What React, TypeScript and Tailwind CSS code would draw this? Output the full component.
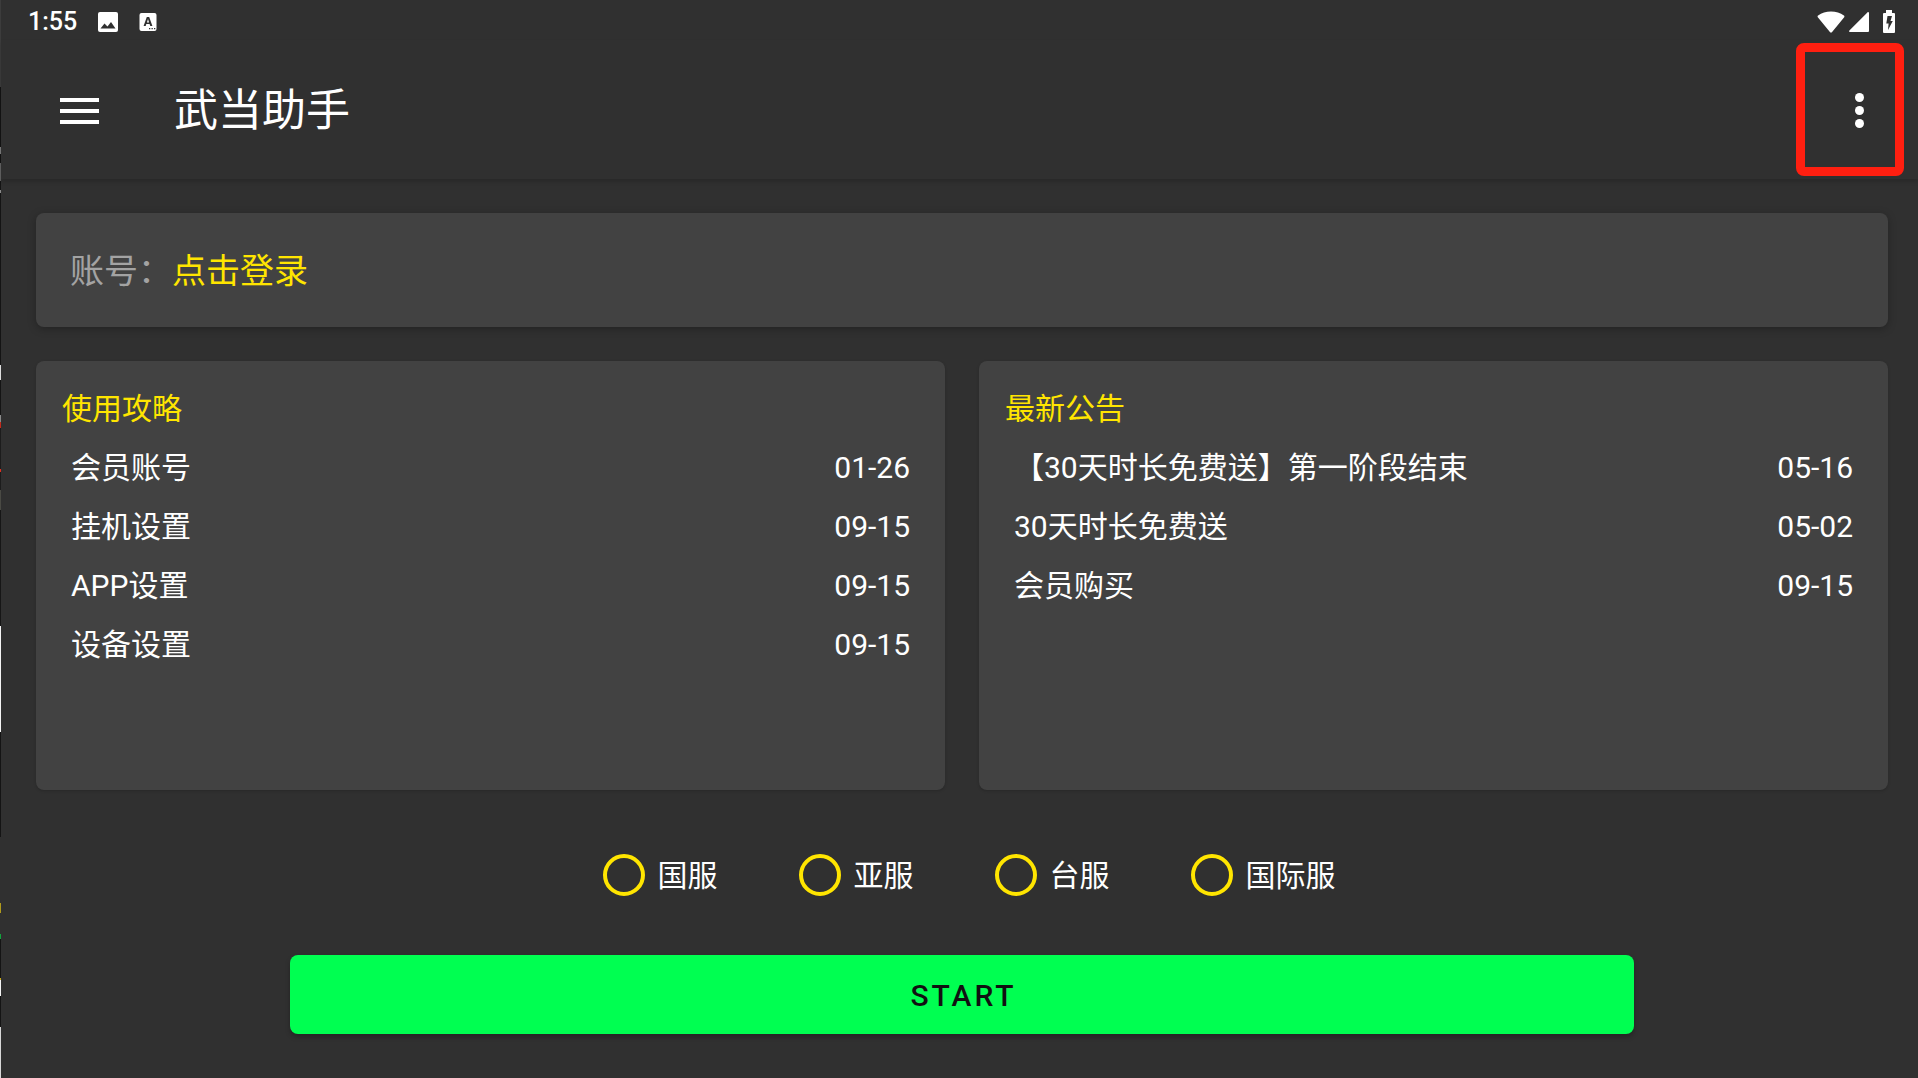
const guides = [
  { title: "会员账号", date: "01-26" },
  { title: "挂机设置", date: "09-15" },
  { title: "APP设置", date: "09-15" },
  { title: "设备设置", date: "09-15" },
];

const notices = [
  { title: "【30天时长免费送】第一阶段结束", date: "05-16" },
  { title: "30天时长免费送", date: "05-02" },
  { title: "会员购买", date: "09-15" },
];

const servers = ["国服", "亚服", "台服", "国际服"];

// Sliver of the windows behind the app: [share of the height, colour]
const sliver: [number, string][] = [
  [87, "#3c3c3c"],
  [60, "#141414"],
  [7, "#7d7d7d"],
  [9, "#141414"],
  [18, "#636363"],
  [9, "#141414"],
  [3, "#8a8a8a"],
  [172, "#141414"],
  [15, "#dddddd"],
  [35, "#141414"],
  [7, "#8a8a8a"],
  [6, "#c42a1c"],
  [41, "#1c1c1c"],
  [3, "#e03020"],
  [18, "#1c1c1c"],
  [20, "#4a4a44"],
  [116, "#161616"],
  [106, "#f4f4f4"],
  [105, "#141414"],
  [66, "#303030"],
  [10, "#b09a1c"],
  [21, "#303030"],
  [5, "#12a33c"],
  [39, "#141414"],
  [2, "#c9ab1c"],
  [16, "#f4f4f4"],
  [31, "#141414"],
  [51, "#d8d8d8"],
];

function StatusBar() {
  return (
    <div className="flex h-10 items-center justify-between pr-[23px] pl-[27px] pt-[3px]">
      <div className="flex items-center">
        <span className="text-[25px] leading-8 font-medium">1:55</span>
        <svg className="ml-5 size-[22px]" viewBox="0 0 22 22" aria-hidden="true">
          <rect x="1" y="1" width="20" height="20" rx="2" fill="#fff" />
          <path d="M3.500 17.500 7.500 12.500l3 3L14 11l4.500 6.500z" fill="#303030" />
        </svg>
        <svg className="ml-5 size-[18px]" viewBox="0 0 18 18" aria-hidden="true">
          <rect x="0.5" y="0" width="17" height="18" rx="2" fill="#fff" />
          <path
            d="M7.8 4h2.4l3.2 9h-2.1l-.7-2H7.3l-.6 2H4.6zM7.9 9.4h2.2L9 6z"
            fill="#303030"
          />
          <path d="M10 15h1.3v1.3H10zM12.5 15h1.3v1.3h-1.3zM15 15h1.3v1.3H15z" fill="#303030" />
        </svg>
      </div>
      <div className="flex items-center">
        <svg className="h-[22px] w-7" viewBox="0 0 28 22" aria-hidden="true">
          <path
            d="M14 21.5c-.5 0-.8-.2-1.1-.6L.8 6.2C.4 5.600.5 5 1.100 4.600 4.600 1.900 9.100.5 14 .5s9.400 1.400 12.900 4.100c.6.4.7 1 .3 1.600L15.100 20.900c-.3.4-.6.6-1.100.6z"
            fill="#fff"
          />
        </svg>
        <svg className="ml-1 size-5" viewBox="0 0 20 20" aria-hidden="true">
          <path d="M20 1v18a1 1 0 0 1-1 1H1c-1 0-1.300-.9-.6-1.600L18.400.4C19-.2 20 .1 20 1z" fill="#fff" />
        </svg>
        <svg className="ml-3.5 h-[23px] w-3" viewBox="0 0 12 23" aria-hidden="true">
          <path
            d="M3 0h6v3h2a1 1 0 0 1 1 1v18a1 1 0 0 1-1 1H1a1 1 0 0 1-1-1V4a1 1 0 0 1 1-1h2z"
            fill="#fff"
          />
          <path d="M4.500 6H9L7.500 11h2.300L5 20l.6-6.500H3.300z" fill="#303030" />
        </svg>
      </div>
    </div>
  );
}

function AppBar() {
  return (
    <header className="flex h-[139px] items-center justify-between pr-3.5 pl-[59px] shadow-[0_3px_4px_rgba(0,0,0,0.15)]">
      <div className="flex items-center pt-0.5">
        <button type="button" aria-label="菜单" className="flex w-[39px] flex-col gap-[7px] py-2">
          <span className="h-1 w-full bg-white" />
          <span className="h-1 w-full bg-white" />
          <span className="h-1 w-full bg-white" />
        </button>
        <h1 className="ml-[75px] text-[44px] leading-[60px] font-normal">武当助手</h1>
      </div>
      <button
        type="button"
        aria-label="更多选项"
        className="flex h-[133px] w-[108px] items-center justify-center rounded-lg border-[9px] border-[#ff1f10] pl-[18px]"
      >
        <svg className="h-9 w-[9px]" viewBox="0 0 9 36" fill="#fff" aria-hidden="true">
          <circle cx="4.500" cy="5.500" r="4.500" />
          <circle cx="4.500" cy="18.500" r="4.500" />
          <circle cx="4.500" cy="31.500" r="4.500" />
        </svg>
      </button>
    </header>
  );
}

function ArticlePanel({ heading, items }: { heading: string; items: { title: string; date: string }[] }) {
  return (
    <section className="min-h-[429px] flex-1 rounded-lg bg-[#424242] pt-[18px] pr-[35px] pl-[26px] text-3xl leading-[59px] shadow-[0_1px_3px_rgba(0,0,0,0.18)]">
      <h2 className="text-[#ffe500]">{heading}</h2>
      <ul>
        {items.map((item) => (
          <li key={item.title}>
            <a href="#" className="flex justify-between pl-[9px]">
              <span>{item.title}</span>
              <time>{item.date}</time>
            </a>
          </li>
        ))}
      </ul>
    </section>
  );
}

export default function App() {
  return (
    <div className="flex min-h-screen bg-[#303030] font-[Roboto,'Noto_Sans_CJK_SC',sans-serif] text-white">
      <div className="flex w-px flex-col" aria-hidden="true">
        {sliver.map(([share, color], i) => (
          <span key={i} style={{ flexGrow: share, backgroundColor: color }} />
        ))}
      </div>
      <div className="min-w-0 flex-1">
        <StatusBar />
        <AppBar />
        <main className="flex flex-col pt-[34px] pr-[30px] pl-[35px]">
          <section className="flex h-[114px] items-center rounded-lg bg-[#424242] px-[34px] pt-0.5 text-[34px] leading-[50px] shadow-[0_2px_8px_rgba(0,0,0,0.28)]">
            <span className="text-[#a3a3a3]">账号：</span>
            <a href="#" className="text-[#ffe500]">
              点击登录
            </a>
          </section>
          <div className="mt-[34px] flex gap-[34px]">
            <ArticlePanel heading="使用攻略" items={guides} />
            <ArticlePanel heading="最新公告" items={notices} />
          </div>
          <fieldset aria-label="服务器" className="mt-16 flex items-center justify-center gap-[81px] pl-3.5">
            {servers.map((name) => (
              <label key={name} className="flex items-center gap-[13px] text-3xl leading-10">
                <input
                  type="radio"
                  name="server"
                  value={name}
                  className="size-[42px] appearance-none rounded-full border-4 border-[#ffe500] checked:bg-[#ffe500]"
                />
                <span className="pt-0.5">{name}</span>
              </label>
            ))}
          </fieldset>
          <button
            type="button"
            className="mx-auto mt-[59px] h-[79px] w-[72.6%] rounded-lg bg-[#00ff51] pt-0.5 pl-[3px] text-3xl font-medium tracking-widest text-[#111] shadow-[0_3px_5px_rgba(0,0,0,0.25)]"
          >
            START
          </button>
        </main>
      </div>
    </div>
  );
}
